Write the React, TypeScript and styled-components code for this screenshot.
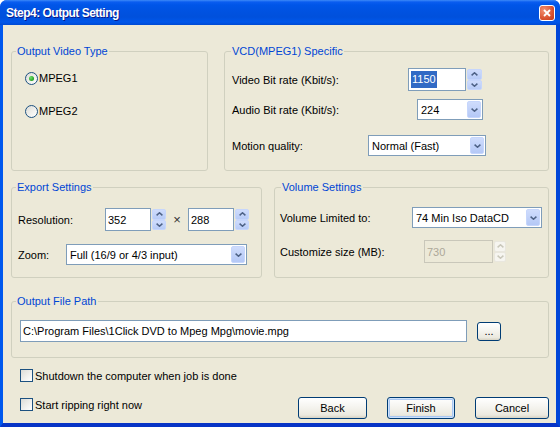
import styled, { createGlobalStyle } from 'styled-components'

const GlobalStyle = createGlobalStyle`
    html, body {
        margin: 0;
        padding: 0;
        background: #ffffff;
    }
    body {
        font-family: "Liberation Sans", Arial, sans-serif;
        font-size: 11px;
        color: #000;
    }
    *, *::before, *::after {
        box-sizing: border-box;
    }
`

const Window = styled.div`
    width: 560px;
    height: 427px;
    display: flex;
    flex-direction: column;
    border-radius: 7px 7px 0 0;
    overflow: hidden;
    background: #0055e5;
`

const TitleBar = styled.div`
    flex: none;
    height: 25px;
    display: flex;
    align-items: center;
    justify-content: space-between;
    padding: 0 5px 0 6px;
    background: linear-gradient(
        180deg,
        #3d8af7 0px,
        #0a5df0 2px,
        #0055e8 5px,
        #0052e0 12px,
        #0050dc 17px,
        #0057ea 22px,
        #004ad3 25px
    );
`

const Title = styled.div`
    color: #fff;
    font-weight: bold;
    font-size: 12px;
    letter-spacing: -0.5px;
    text-shadow: 1px 1px 0 #0a1a8a;
    padding-top: 1px;
`

const CloseButton = styled.div`
    width: 16px;
    height: 16px;
    border: 1px solid #fff;
    border-radius: 3px;
    background: radial-gradient(circle at 30% 30%, #f29173, #da5331 60%, #c23a1b);
    display: flex;
    align-items: center;
    justify-content: center;
`

const Frame = styled.div`
    flex: 1;
    min-height: 0;
    display: flex;
    border-left: 3px solid #0058ee;
    border-right: 4px solid #0046d8;
    border-bottom: 4px solid #0734c6;
`

const Client = styled.div`
    flex: 1;
    display: flex;
    flex-direction: column;
    padding: 19px 7px 0 8px;
    background: #ece9d8;
`

const GroupRow = styled.div<{ $cols: string; $gap?: number; $h: number; $mt?: number }>`
    display: grid;
    grid-template-columns: ${(p) => p.$cols};
    column-gap: ${(p) => p.$gap ?? 0}px;
    height: ${(p) => p.$h}px;
    margin-top: ${(p) => p.$mt ?? 0}px;
`

const Group = styled.fieldset`
    margin: 0;
    padding: 0;
    min-width: 0;
    border: 1px solid #d0d0bf;
    border-radius: 3px;
`

const Legend = styled.legend<{ $indent: number }>`
    margin-left: ${(p) => p.$indent}px;
    padding: 0 1px;
    color: #0046d5;
    font-size: 11px;
    line-height: 14px;
`

const GroupBody = styled.div<{ $pad: string }>`
    display: flex;
    flex-direction: column;
    padding: ${(p) => p.$pad};
`

const Row = styled.div<{ $h: number; $mt?: number }>`
    display: flex;
    align-items: center;
    height: ${(p) => p.$h}px;
    margin-top: ${(p) => p.$mt ?? 0}px;
`

const Label = styled.span<{ $w?: number }>`
    flex: none;
    width: ${(p) => (p.$w ? `${p.$w}px` : 'auto')};
    white-space: nowrap;
`

const Radio = styled.span<{ $checked?: boolean }>`
    flex: none;
    width: 13px;
    height: 13px;
    border-radius: 50%;
    border: 1px solid #1c5180;
    background: linear-gradient(135deg, #dcdcd7 0%, #f2f2ef 60%, #ffffff 100%);
    display: flex;
    align-items: center;
    justify-content: center;
    margin-right: 1px;

    &::after {
        content: '';
        display: ${(p) => (p.$checked ? 'block' : 'none')};
        width: 5px;
        height: 5px;
        border-radius: 50%;
        background: radial-gradient(circle at 35% 35%, #6fe06b, #21a121 70%);
    }
`

const Field = styled.div<{ $w: number; $disabled?: boolean }>`
    flex: none;
    width: ${(p) => p.$w}px;
    height: 100%;
    display: flex;
    align-items: center;
    padding-left: 2px;
    border: 1px solid ${(p) => (p.$disabled ? '#c9c7ba' : '#7f9db9')};
    background: ${(p) => (p.$disabled ? '#ece9d8' : '#ffffff')};
    color: ${(p) => (p.$disabled ? '#aca899' : '#000')};
    white-space: nowrap;
    overflow: hidden;
`

const Selected = styled.span`
    display: inline-block;
    line-height: 17px;
    padding: 0 1px;
    background: #316ac5;
    color: #fff;
`

const SpinWrap = styled.div`
    flex: none;
    display: flex;
    gap: 1px;
    height: 100%;
`

const SpinButtons = styled.div<{ $w: number }>`
    width: ${(p) => p.$w}px;
    display: flex;
    flex-direction: column;
    margin: 1px 0;
`

const SpinHalf = styled.div<{ $disabled?: boolean }>`
    flex: 1;
    display: flex;
    align-items: center;
    justify-content: center;
    border-radius: 2px;
    border: 1px solid ${(p) => (p.$disabled ? '#e9e7de' : '#c6d6fc')};
    background: ${(p) =>
        p.$disabled
            ? '#f6f5f0'
            : 'linear-gradient(180deg, #cfdcfc 0%, #b7cbf7 100%)'};
`

const Select = styled.div<{ $w: number }>`
    flex: none;
    width: ${(p) => p.$w}px;
    height: 100%;
    display: flex;
    border: 1px solid #7f9db9;
    background: #fff;
`

const SelectText = styled.span`
    flex: 1;
    display: flex;
    align-items: center;
    padding-left: 3px;
    white-space: nowrap;
    overflow: hidden;
`

const DropButton = styled.div`
    flex: none;
    width: 14px;
    margin: 1px;
    display: flex;
    align-items: center;
    justify-content: center;
    border-radius: 2px;
    border: 1px solid #c6d6fc;
    background: linear-gradient(180deg, #cfdcfc 0%, #b4c8f6 100%);
`

const Times = styled.span`
    flex: none;
    width: 22px;
    text-align: center;
    font-size: 13px;
    color: #333;
`

const PushButton = styled.button<{ $w: number; $h?: number; $default?: boolean; $ml?: number }>`
    flex: none;
    width: ${(p) => p.$w}px;
    height: ${(p) => p.$h ?? 22}px;
    margin-left: ${(p) => p.$ml ?? 0}px;
    padding: 0;
    border: 1px solid #003c74;
    border-radius: 3px;
    background: linear-gradient(180deg, #ffffff 0%, #f5f4ef 45%, #ebe9df 85%, #d7d2c3 100%);
    box-shadow: ${(p) =>
        p.$default ? 'inset 0 0 0 1px #cde2fc, inset 0 0 0 2px #a9c7f2' : 'none'};
    font: 11px "Liberation Sans", Arial, sans-serif;
    color: #000;
`

const Footer = styled.div`
    display: flex;
    flex-direction: column;
    padding-left: 9px;
`

const FooterBar = styled.div`
    display: flex;
    justify-content: space-between;
    margin-top: 14px;
`

const CheckRow = styled.label<{ $mt?: number }>`
    display: flex;
    align-items: center;
    align-self: flex-start;
    gap: 2px;
    height: 15px;
    margin-top: ${(p) => p.$mt ?? 0}px;
    white-space: nowrap;
`

const CheckBox = styled.span`
    flex: none;
    width: 13px;
    height: 13px;
    border: 1px solid #1c5180;
    background: linear-gradient(135deg, #dcdcd7 0%, #f2f2ef 60%, #ffffff 100%);
`

const ButtonGroup = styled.div`
    display: flex;
    gap: 20px;
`

function Chevron({ up, color = '#4d6185' }: { up?: boolean; color?: string }) {
    return (
        <svg width="7" height="4" viewBox="0 0 7 4">
            <path
                d={up ? 'M0.6 3.4 3.5 0.8 6.4 3.4' : 'M0.6 0.6 3.5 3.2 6.4 0.6'}
                fill="none"
                stroke={color}
                strokeWidth="1.5"
            />
        </svg>
    )
}

function Spin({
    w,
    bw = 14,
    disabled,
    children,
}: {
    w: number
    bw?: number
    disabled?: boolean
    children: React.ReactNode
}) {
    const c = disabled ? '#c9c7ba' : '#4d6185'
    return (
        <SpinWrap>
            <Field $w={w} $disabled={disabled}>
                {children}
            </Field>
            <SpinButtons $w={bw}>
                <SpinHalf $disabled={disabled}>
                    <Chevron up color={c} />
                </SpinHalf>
                <SpinHalf $disabled={disabled}>
                    <Chevron color={c} />
                </SpinHalf>
            </SpinButtons>
        </SpinWrap>
    )
}

function Combo({ w, children }: { w: number; children: React.ReactNode }) {
    return (
        <Select $w={w}>
            <SelectText>{children}</SelectText>
            <DropButton>
                <Chevron />
            </DropButton>
        </Select>
    )
}

export default function App() {
    return (
        <>
            <GlobalStyle />
            <Window>
                <TitleBar>
                    <Title>Step4: Output Setting</Title>
                    <CloseButton>
                        <svg width="8" height="8" viewBox="0 0 8 8">
                            <path d="M1 1 7 7 M7 1 1 7" stroke="#fff" strokeWidth="1.8" />
                        </svg>
                    </CloseButton>
                </TitleBar>
                <Frame>
                    <Client>
                        <GroupRow $cols="197px 325px" $gap={16} $h={127}>
                            <Group>
                                <Legend $indent={4}>Output Video Type</Legend>
                                <GroupBody $pad="12px 0 0 13px">
                                    <Row $h={16}>
                                        <Radio $checked />
                                        <Label>MPEG1</Label>
                                    </Row>
                                    <Row $h={16} $mt={17}>
                                        <Radio />
                                        <Label>MPEG2</Label>
                                    </Row>
                                </GroupBody>
                            </Group>
                            <Group>
                                <Legend $indent={6}>VCD(MPEG1) Specific</Legend>
                                <GroupBody $pad="10px 0 0 7px">
                                    <Row $h={23}>
                                        <Label $w={176}>Video Bit rate (Kbit/s):</Label>
                                        <Spin w={58} bw={15}>
                                            <Selected>1150</Selected>
                                        </Spin>
                                    </Row>
                                    <Row $h={21} $mt={8}>
                                        <Label $w={185}>Audio Bit rate (Kbit/s):</Label>
                                        <Combo w={66}>224</Combo>
                                    </Row>
                                    <Row $h={21} $mt={15}>
                                        <Label $w={136}>Motion quality:</Label>
                                        <Combo w={118}>Normal (Fast)</Combo>
                                    </Row>
                                </GroupBody>
                            </Group>
                        </GroupRow>

                        <GroupRow $cols="251px 275px" $gap={12} $h={98} $mt={9}>
                            <Group>
                                <Legend $indent={4}>Export Settings</Legend>
                                <GroupBody $pad="14px 0 0 6px">
                                    <Row $h={23}>
                                        <Label $w={87}>Resolution:</Label>
                                        <Spin w={46}>352</Spin>
                                        <Times>×</Times>
                                        <Spin w={46}>288</Spin>
                                    </Row>
                                    <Row $h={21} $mt={13}>
                                        <Label $w={48}>Zoom:</Label>
                                        <Combo w={181}>Full (16/9 or 4/3 input)</Combo>
                                    </Row>
                                </GroupBody>
                            </Group>
                            <Group>
                                <Legend $indent={6}>Volume Settings</Legend>
                                <GroupBody $pad="13px 0 0 5px">
                                    <Row $h={21}>
                                        <Label $w={132}>Volume Limited to:</Label>
                                        <Combo w={130}>74 Min Iso DataCD</Combo>
                                    </Row>
                                    <Row $h={23} $mt={12}>
                                        <Label $w={144}>Customize size (MB):</Label>
                                        <Spin w={69} bw={12} disabled>
                                            730
                                        </Spin>
                                    </Row>
                                </GroupBody>
                            </Group>
                        </GroupRow>

                        <GroupRow $cols="1fr" $h={64} $mt={16}>
                            <Group>
                                <Legend $indent={4}>Output File Path</Legend>
                                <GroupBody $pad="12px 0 0 8px">
                                    <Row $h={22}>
                                        <Field $w={447}>
                                            C:\Program Files\1Click DVD to Mpeg Mpg\movie.mpg
                                        </Field>
                                        <PushButton $w={24} $h={19} $ml={10}>
                                            ...
                                        </PushButton>
                                    </Row>
                                </GroupBody>
                            </Group>
                        </GroupRow>

                        <Footer>
                            <CheckRow $mt={10}>
                                <CheckBox />
                                Shutdown the computer when job is done
                            </CheckRow>
                            <FooterBar>
                                <CheckRow>
                                    <CheckBox />
                                    Start ripping right now
                                </CheckRow>
                                <ButtonGroup>
                                    <PushButton $w={69}>Back</PushButton>
                                    <PushButton $w={68} $default>
                                        Finish
                                    </PushButton>
                                    <PushButton $w={74}>Cancel</PushButton>
                                </ButtonGroup>
                            </FooterBar>
                        </Footer>
                    </Client>
                </Frame>
            </Window>
        </>
    )
}
